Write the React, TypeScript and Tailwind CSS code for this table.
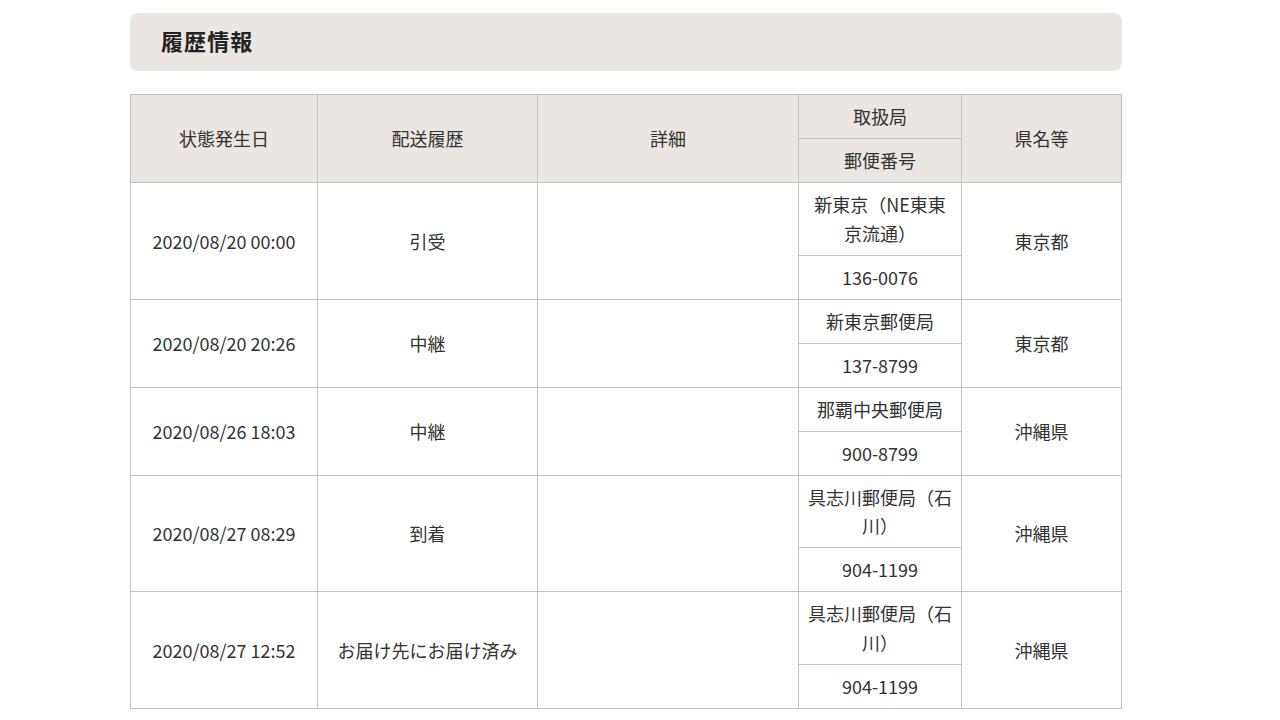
const rows = [
  { date: "2020/08/20 00:00", status: "引受", office: "新東京（NE東東京流通）", zip: "136-0076", pref: "東京都" },
  { date: "2020/08/20 20:26", status: "中継", office: "新東京郵便局", zip: "137-8799", pref: "東京都" },
  { date: "2020/08/26 18:03", status: "中継", office: "那覇中央郵便局", zip: "900-8799", pref: "沖縄県" },
  { date: "2020/08/27 08:29", status: "到着", office: "具志川郵便局（石川）", zip: "904-1199", pref: "沖縄県" },
  { date: "2020/08/27 12:52", status: "お届け先にお届け済み", office: "具志川郵便局（石川）", zip: "904-1199", pref: "沖縄県" },
];

const th = "border border-[#c4c0bc] bg-[#ebe6e1] px-2 py-[7.25px] font-normal leading-[28.5px]";
const td = "border border-[#c4c0bc] px-2 py-[7.25px] leading-[28.5px]";

export default function App() {
  return (
    <div
      className="min-h-screen bg-white text-[18px] text-[#333]"
      style={{ fontFamily: '"Noto Sans CJK JP", "Noto Sans", sans-serif' }}
    >
      <div className="ml-[130px] w-[992px] pt-[13px]">
        <div className="flex h-[58px] items-center rounded-lg bg-[#ebe6e1] pb-[3px] pl-[31px]">
          <h2 className="text-[22px] font-bold tracking-[0.05em] text-[#222]">履歴情報</h2>
        </div>

        <table className="mt-[23px] w-full table-fixed border-collapse text-center">
          <colgroup>
            <col className="w-[187px]" />
            <col className="w-[220px]" />
            <col className="w-[261px]" />
            <col className="w-[163px]" />
            <col />
          </colgroup>
          <thead>
            <tr>
              <th rowSpan={2} className={th}>状態発生日</th>
              <th rowSpan={2} className={th}>配送履歴</th>
              <th rowSpan={2} className={th}>詳細</th>
              <th className={th}>取扱局</th>
              <th rowSpan={2} className={th}>県名等</th>
            </tr>
            <tr>
              <th className={th}>郵便番号</th>
            </tr>
          </thead>
          <tbody>
            {rows.flatMap((r, i) => [
              <tr key={`a${i}`}>
                <td rowSpan={2} className={td}>{r.date}</td>
                <td rowSpan={2} className={td}>{r.status}</td>
                <td rowSpan={2} className={td}></td>
                <td className={td}>{r.office}</td>
                <td rowSpan={2} className={td}>{r.pref}</td>
              </tr>,
              <tr key={`b${i}`}>
                <td className={td}>{r.zip}</td>
              </tr>,
            ])}
          </tbody>
        </table>
      </div>
    </div>
  );
}
